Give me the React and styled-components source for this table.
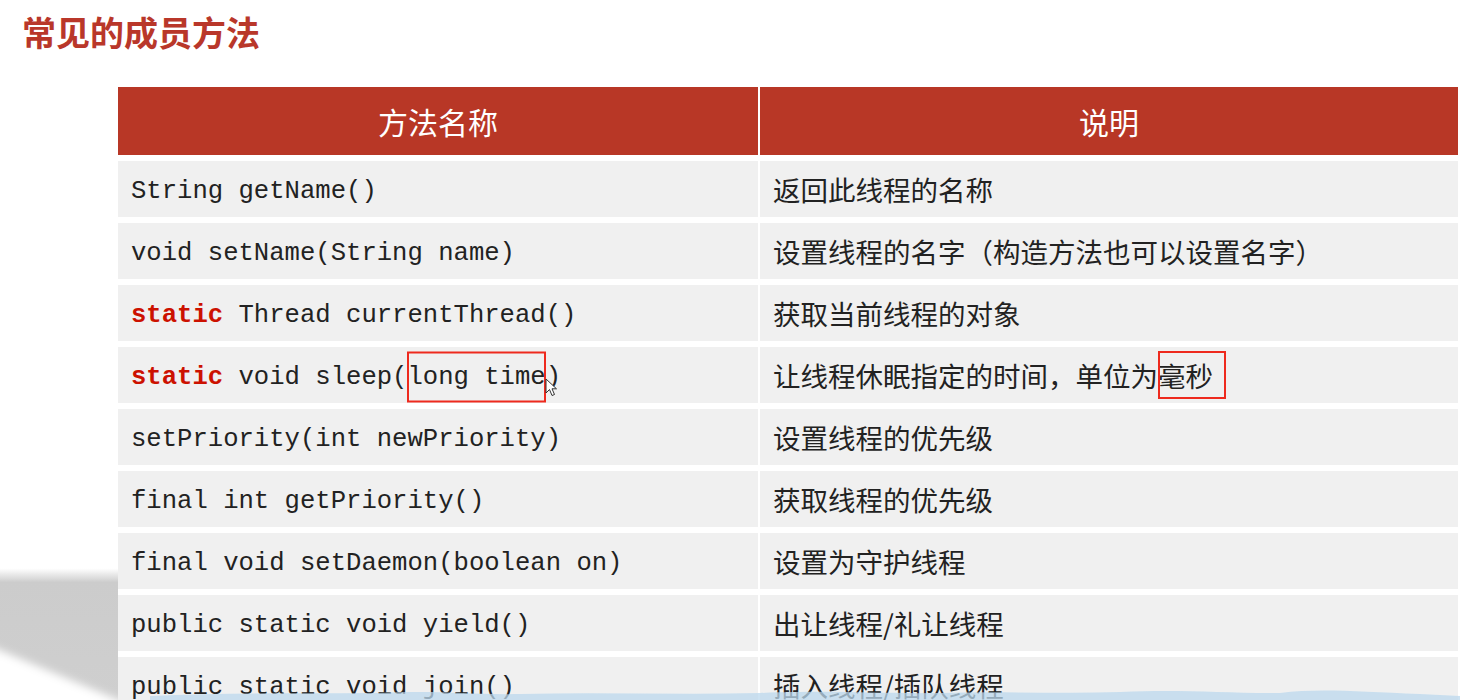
import React from 'react';
import styled, { createGlobalStyle } from 'styled-components';

const GlobalStyle = createGlobalStyle`
  html, body {
    margin: 0;
    padding: 0;
    background: #ffffff;
  }
  body {
    font-family: "Noto Sans CJK SC", "Noto Sans", sans-serif;
  }
`;

const Page = styled.div`
  position: relative;
  width: 1460px;
  height: 700px;
  overflow: hidden;
  background: #ffffff;
`;

const Title = styled.h1`
  margin: 0;
  padding: 12px 0 0 22px;
  font-size: 34px;
  line-height: 40px;
  font-weight: 700;
  color: #b9372a;
  font-family: "Noto Sans CJK SC", sans-serif;
`;

const Table = styled.div`
  position: relative;
  z-index: 1;
  display: grid;
  grid-template-columns: 640px 698px;
  grid-template-rows: 68px;
  grid-auto-rows: 56px;
  column-gap: 2px;
  row-gap: 6px;
  margin: 35px 0 0 118px;
`;

const HeadCell = styled.div`
  background: #b83726;
  color: #ffffff;
  display: flex;
  align-items: center;
  justify-content: center;
  font-size: 30px;
  font-family: "Noto Sans CJK SC", sans-serif;
`;

const Cell = styled.div`
  background: #f0f0f0;
  color: #222222;
  display: flex;
  align-items: center;
  box-sizing: border-box;
  padding: ${p => (p.$code ? '4px 0 0 13px' : '0 0 0 13px')};
  white-space: pre;
  font-size: ${p => (p.$code ? '25.6px' : '27.5px')};
  font-family: ${p => (p.$code
    ? '"Liberation Mono", "DejaVu Sans Mono", monospace'
    : '"Noto Sans CJK SC", sans-serif')};
`;

const Keyword = styled.span`
  color: #cc1100;
  font-weight: 700;
`;

const Marked = styled.span`
  position: relative;
  &::after {
    content: '';
    position: absolute;
    left: 0;
    right: ${p => p.$extra || 0}px;
    top: 50%;
    height: ${p => p.$h}px;
    transform: translateY(-50%);
    border: 2px solid #ee2a1e;
    box-sizing: border-box;
  }
`;

const Cursor = styled.svg`
  position: absolute;
  left: 100%;
  top: 55%;
  margin-left: -1px;
  z-index: 2;
`;

const Shade = styled.svg`
  position: absolute;
  left: 0;
  top: 560px;
  z-index: 0;
`;

const Wave = styled.svg`
  position: absolute;
  left: 0;
  bottom: 0;
  z-index: 2;
  opacity: 0.75;
`;

const rows = [
  { m: 'String getName()', d: '返回此线程的名称' },
  { m: 'void setName(String name)', d: '设置线程的名字（构造方法也可以设置名字）' },
  { m: <><Keyword>static</Keyword> Thread currentThread()</>, d: '获取当前线程的对象' },
  {
    m: <><Keyword>static</Keyword> void sleep(<Marked $h={51}>long time<Cursor width="13" height="19" viewBox="0 0 13 19"><path d="M1 1 L1 15 L4.5 11.5 L7 17.5 L9.5 16.5 L7 10.8 L11.5 10.8 Z" fill="#fff" stroke="#333" strokeWidth="1" /></Cursor></Marked>)</>,
    d: <>让线程休眠指定的时间，单位为<Marked $h={48} $extra={-13}>毫秒</Marked></>,
  },
  { m: 'setPriority(int newPriority)', d: '设置线程的优先级' },
  { m: 'final int getPriority()', d: '获取线程的优先级' },
  { m: 'final void setDaemon(boolean on)', d: '设置为守护线程' },
  { m: 'public static void yield()', d: '出让线程/礼让线程' },
  { m: 'public static void join()', d: '插入线程/插队线程' },
];

export default function App() {
  return (
    <Page>
      <GlobalStyle />
      <Shade width="120" height="140" viewBox="0 0 120 140">
        <defs>
          <linearGradient id="fade" x1="0" y1="0" x2="0" y2="1">
            <stop offset="0" stopColor="#ffffff" />
            <stop offset="0.06" stopColor="#ffffff" />
            <stop offset="0.16" stopColor="#cccccc" />
            <stop offset="1" stopColor="#cfcfcf" />
          </linearGradient>
          <filter id="soft"><feGaussianBlur stdDeviation="4" /></filter>
        </defs>
        <rect x="0" y="0" width="118" height="140" fill="url(#fade)" />
        <polygon points="-20,82 130,145 130,170 -20,170" fill="#ffffff" filter="url(#soft)" />
      </Shade>
      <Title>常见的成员方法</Title>
      <Table>
        <HeadCell>方法名称</HeadCell>
        <HeadCell>说明</HeadCell>
        {rows.map((r, i) => (
          <React.Fragment key={i}>
            <Cell $code>{r.m}</Cell>
            <Cell>{r.d}</Cell>
          </React.Fragment>
        ))}
      </Table>
      <Wave width="1460" height="16" viewBox="0 0 1460 16">
        <path
          d="M150 16 L150 12 C220 8 300 10 380 9 C440 6 470 11 520 10 C600 8 680 11 760 9 C840 6 880 10 940 9 C1000 7 1060 10 1120 8 C1180 5 1220 9 1280 9 C1320 4 1360 8 1420 10 L1460 12 L1460 16 Z"
          fill="#bcd9ee"
        />
      </Wave>
    </Page>
  );
}
